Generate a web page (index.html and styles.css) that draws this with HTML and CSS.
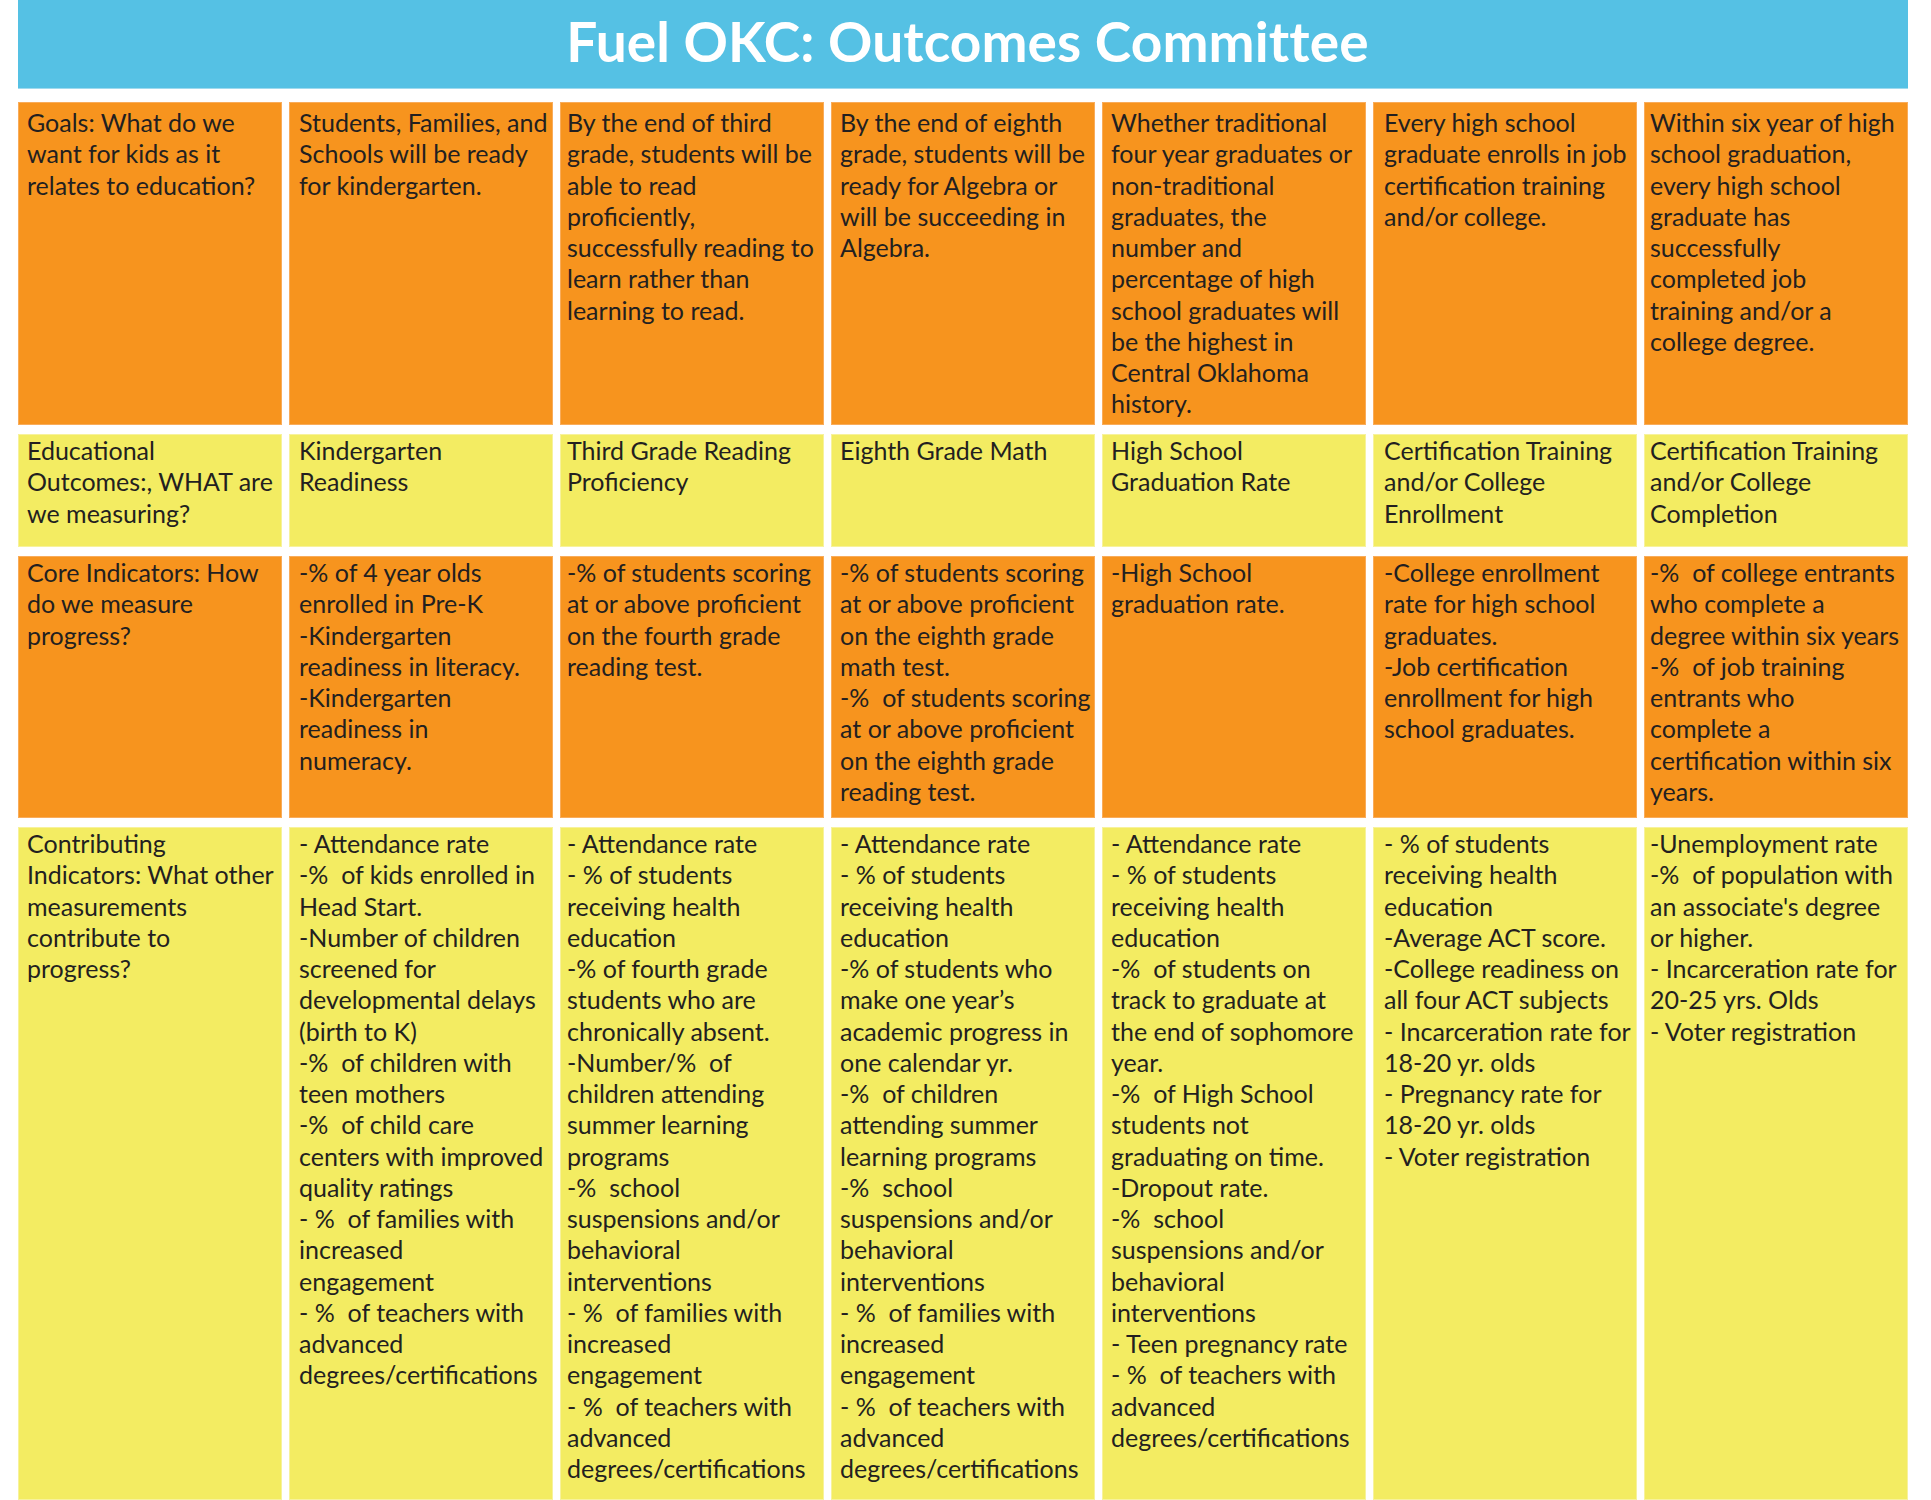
FILE: index.html
```html
<!DOCTYPE html>
<html lang="en">
<head>
<meta charset="utf-8">
<title>Fuel OKC: Outcomes Committee</title>
<link rel="stylesheet" href="styles.css">
</head>
<body>
<div class="page">
  <header class="banner"><h1 class="title">Fuel OKC: Outcomes Committee</h1></header>
  <main class="board">
    <div class="cell orange">Goals: What do we<br>want for kids as it<br>relates to education?</div>
    <div class="cell orange">Students, Families, and<br>Schools will be ready<br>for kindergarten.</div>
    <div class="cell orange">By the end of third<br>grade, students will be<br>able to read<br>proficiently,<br>successfully reading to<br>learn rather than<br>learning to read.</div>
    <div class="cell orange">By the end of eighth<br>grade, students will be<br>ready for Algebra or<br>will be succeeding in<br>Algebra.</div>
    <div class="cell orange">Whether traditional<br>four year graduates or<br>non-traditional<br>graduates, the<br>number and<br>percentage of high<br>school graduates will<br>be the highest in<br>Central Oklahoma<br>history.</div>
    <div class="cell orange">Every high school<br>graduate enrolls in job<br>certification training<br>and/or college.</div>
    <div class="cell orange">Within six year of high<br>school graduation,<br>every high school<br>graduate has<br>successfully<br>completed job<br>training and/or a<br>college degree.</div>

    <div class="cell yellow">Educational<br>Outcomes:, WHAT are<br>we measuring?</div>
    <div class="cell yellow">Kindergarten<br>Readiness</div>
    <div class="cell yellow">Third Grade Reading<br>Proficiency</div>
    <div class="cell yellow">Eighth Grade Math</div>
    <div class="cell yellow">High School<br>Graduation Rate</div>
    <div class="cell yellow">Certification Training<br>and/or College<br>Enrollment</div>
    <div class="cell yellow">Certification Training<br>and/or College<br>Completion</div>

    <div class="cell orange">Core Indicators: How<br>do we measure<br>progress?</div>
    <div class="cell orange">-% of 4 year olds<br>enrolled in Pre-K<br>-Kindergarten<br>readiness in literacy.<br>-Kindergarten<br>readiness in<br>numeracy.</div>
    <div class="cell orange">-% of students scoring<br>at or above proficient<br>on the fourth grade<br>reading test.</div>
    <div class="cell orange">-% of students scoring<br>at or above proficient<br>on the eighth grade<br>math test.<br>-%  of students scoring<br>at or above proficient<br>on the eighth grade<br>reading test.</div>
    <div class="cell orange">-High School<br>graduation rate.</div>
    <div class="cell orange">-College enrollment<br>rate for high school<br>graduates.<br>-Job certification<br>enrollment for high<br>school graduates.</div>
    <div class="cell orange">-%  of college entrants<br>who complete a<br>degree within six years<br>-%  of job training<br>entrants who<br>complete a<br>certification within six<br>years.</div>

    <div class="cell yellow">Contributing<br>Indicators: What other<br>measurements<br>contribute to<br>progress?</div>
    <div class="cell yellow">- Attendance rate<br>-%  of kids enrolled in<br>Head Start.<br>-Number of children<br>screened for<br>developmental delays<br>(birth to K)<br>-%  of children with<br>teen mothers<br>-%  of child care<br>centers with improved<br>quality ratings<br>- %  of families with<br>increased<br>engagement<br>- %  of teachers with<br>advanced<br>degrees/certifications</div>
    <div class="cell yellow">- Attendance rate<br>- % of students<br>receiving health<br>education<br>-% of fourth grade<br>students who are<br>chronically absent.<br>-Number/%  of<br>children attending<br>summer learning<br>programs<br>-%  school<br>suspensions and/or<br>behavioral<br>interventions<br>- %  of families with<br>increased<br>engagement<br>- %  of teachers with<br>advanced<br>degrees/certifications</div>
    <div class="cell yellow">- Attendance rate<br>- % of students<br>receiving health<br>education<br>-% of students who<br>make one year’s<br>academic progress in<br>one calendar yr.<br>-%  of children<br>attending summer<br>learning programs<br>-%  school<br>suspensions and/or<br>behavioral<br>interventions<br>- %  of families with<br>increased<br>engagement<br>- %  of teachers with<br>advanced<br>degrees/certifications</div>
    <div class="cell yellow">- Attendance rate<br>- % of students<br>receiving health<br>education<br>-%  of students on<br>track to graduate at<br>the end of sophomore<br>year.<br>-%  of High School<br>students not<br>graduating on time.<br>-Dropout rate.<br>-%  school<br>suspensions and/or<br>behavioral<br>interventions<br>- Teen pregnancy rate<br>- %  of teachers with<br>advanced<br>degrees/certifications</div>
    <div class="cell yellow">- % of students<br>receiving health<br>education<br>-Average ACT score.<br>-College readiness on<br>all four ACT subjects<br>- Incarceration rate for<br>18-20 yr. olds<br>- Pregnancy rate for<br>18-20 yr. olds<br>- Voter registration</div>
    <div class="cell yellow">-Unemployment rate<br>-%  of population with<br>an associate's degree<br>or higher.<br>- Incarceration rate for<br>20-25 yrs. Olds<br>- Voter registration</div>
  </main>
</div>
</body>
</html>
```
FILE: styles.css
```css
html, body {
  margin: 0;
  padding: 0;
  background: #ffffff;
  overflow: hidden;
}

.page {
  width: 1890px;
  padding: 0 23px 0 18px;
  display: flex;
  flex-direction: column;
  gap: 13px;
  font-family: "Lato", "Liberation Sans", sans-serif;
  color: #231f20;
}

.banner {
  height: 88px;
  background: #55c1e4;
  border-bottom: 1px solid #9fdaee;
  display: flex;
  justify-content: center;
}

.title {
  margin: 0;
  padding: 8px 0 0 9px;
  font-size: 55px;
  line-height: 66px;
  font-weight: 700;
  color: #ffffff;
  letter-spacing: 0.1px;
}

.board {
  display: grid;
  grid-template-columns: repeat(7, 264px);
  grid-template-rows: 323px 113px 262px 673px;
  column-gap: 7px;
  row-gap: 9px;
}

.cell {
  box-sizing: border-box;
  font-size: 25px;
  line-height: 31.25px;
  white-space: pre;
  padding: 0 4px 0 10px;
  overflow: visible;
}

.orange {
  background: #f7941e;
  border: 1px solid #f9ac5a;
}

.yellow {
  background: #f3ec62;
  border: 1px solid #f7f29c;
}

/* first row text frame sits a little lower */
.board .cell:nth-child(-n+7) {
  padding-top: 4px;
}

/* per-column inner left offset of text frames */
.board .cell:nth-child(7n+1) { padding-left: 8px; }
.board .cell:nth-child(7n+2) { padding-left: 9px; }
.board .cell:nth-child(7n+3) { padding-left: 6px; }
.board .cell:nth-child(7n+4) { padding-left: 8px; }
.board .cell:nth-child(7n+5) { padding-left: 8px; }
.board .cell:nth-child(7n+6) { padding-left: 10px; }
.board .cell:nth-child(7n)   { padding-left: 5px; }
```
